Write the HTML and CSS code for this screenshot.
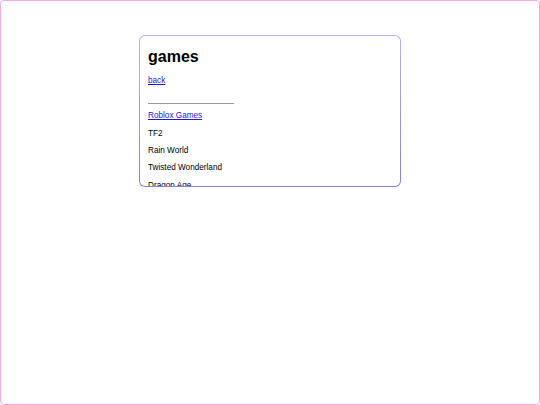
FILE: index.html
```html
<!DOCTYPE html>
<html>
<head>
<meta charset="utf-8">
<link rel="stylesheet" href="styles.css">
</head>
<body>
<div class="page">
  <div class="card">
    <h1 class="title">games</h1>
    <p class="back"><a href="#">back</a></p>
    <hr class="rule">
    <div class="list">
      <p class="item"><a href="#">Roblox Games</a></p>
      <p class="item">TF2</p>
      <p class="item">Rain World</p>
      <p class="item">Twisted Wonderland</p>
      <p class="item">Dragon Age</p>
    </div>
  </div>
</div>
</body>
</html>
```
FILE: styles.css
```css
html, body {
  margin: 0;
  padding: 0;
  background: #ffffff;
}
body {
  font-family: "Liberation Sans", Arial, sans-serif;
  color: #000000;
}
.page {
  box-sizing: border-box;
  width: 540px;
  height: 405px;
  border: 1px solid #f4a8ea;
  border-radius: 4px;
  padding-top: 34px;
  display: flex;
  justify-content: center;
  align-items: flex-start;
}
.card {
  box-sizing: border-box;
  width: 262px;
  height: 152px;
  padding: 0 8px;
  border: 1px solid transparent;
  border-radius: 6px;
  background:
    linear-gradient(#ffffff, #ffffff) padding-box,
    linear-gradient(#b7b1f4, #8a7edd) border-box;
  overflow: hidden;
}
.title {
  font-size: 16px;
  line-height: 18px;
  font-weight: bold;
  margin: 11.5px 0 0;
}
.back {
  font-size: 8.2px;
  line-height: 9.3px;
  margin: 10px 0 0;
}
a {
  color: #1a1ad6;
  text-decoration: underline;
}
.rule {
  width: 86px;
  height: 0;
  margin: 18px 0 0;
  border: none;
  border-top: 1px solid #9a9a9a;
}
.list {
  display: flex;
  flex-direction: column;
  gap: 8.1px;
  margin-top: 7.5px;
}
.item {
  font-size: 8.2px;
  line-height: 9.3px;
  margin: 0;
  white-space: nowrap;
}
```
